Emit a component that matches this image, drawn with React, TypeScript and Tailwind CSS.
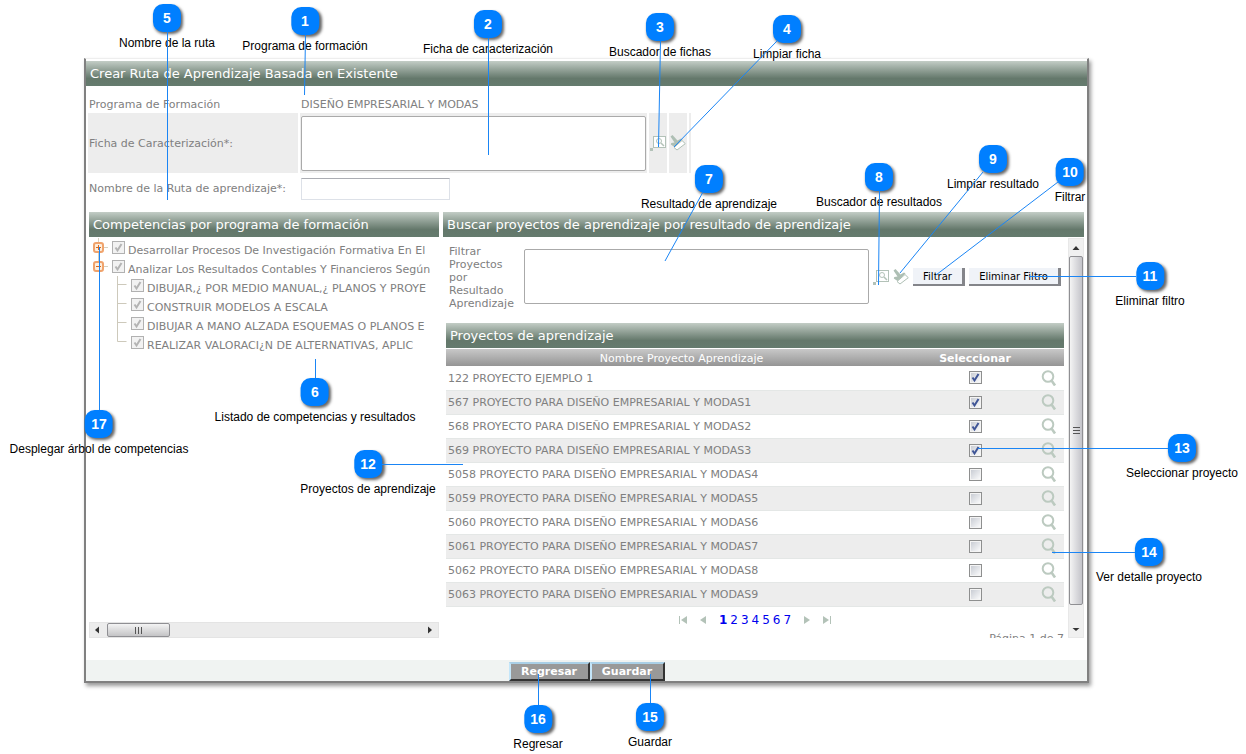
import { useState } from "react";

const CALLOUTS = [
  { n: 5, text: "Nombre de la ruta", place: "left-[167px] top-[4px]" },
  { n: 1, text: "Programa de formación", place: "left-[305px] top-[7px]" },
  { n: 2, text: "Ficha de caracterización", place: "left-[488px] top-[10px]" },
  { n: 3, text: "Buscador de fichas", place: "left-[660px] top-[13px]" },
  { n: 4, text: "Limpiar ficha", place: "left-[787px] top-[15px]" },
  { n: 7, text: "Resultado de aprendizaje", place: "left-[709px] top-[165px]" },
  { n: 8, text: "Buscador de resultados", place: "left-[879px] top-[163px]" },
  { n: 9, text: "Limpiar resultado", place: "left-[993px] top-[145px]" },
  { n: 10, text: "Filtrar", place: "left-[1070px] top-[158px]" },
  { n: 11, text: "Eliminar filtro", place: "left-[1150px] top-[262px]" },
  { n: 17, text: "Desplegar árbol de competencias", place: "left-[99px] top-[410px]" },
  { n: 6, text: "Listado de competencias y resultados", place: "left-[315px] top-[378px]" },
  { n: 12, text: "Proyectos de aprendizaje", place: "left-[368px] top-[450px]" },
  { n: 13, text: "Seleccionar proyecto", place: "left-[1182px] top-[434px]" },
  { n: 14, text: "Ver detalle proyecto", place: "left-[1149px] top-[538px]" },
  { n: 16, text: "Regresar", place: "left-[538px] top-[705px]" },
  { n: 15, text: "Guardar", place: "left-[650px] top-[703px]" },
];

const LEADERS = [
  [167.5, 32, 167.5, 200],
  [305.5, 35, 304.5, 95],
  [488.5, 38, 488.5, 155],
  [660.5, 41, 658.5, 147],
  [777, 41, 674, 147],
  [703, 192, 665, 261],
  [879.5, 191, 878.5, 285],
  [983, 172, 900, 273],
  [1058, 182, 936, 275],
  [1136, 276.5, 1029, 276.5],
  [99.5, 247, 99.5, 410],
  [315.5, 359, 315.5, 378],
  [382, 464.5, 463, 464.5],
  [978, 448.5, 1168, 448.5],
  [1052, 552.5, 1135, 552.5],
  [538.5, 674, 538.5, 705],
  [650.5, 674, 650.5, 703],
];

const PROJECTS = [
  { name: "122 PROYECTO EJEMPLO 1", on: true },
  { name: "567 PROYECTO PARA DISEÑO EMPRESARIAL Y MODAS1", on: true },
  { name: "568 PROYECTO PARA DISEÑO EMPRESARIAL Y MODAS2", on: true },
  { name: "569 PROYECTO PARA DISEÑO EMPRESARIAL Y MODAS3", on: true },
  { name: "5058 PROYECTO PARA DISEÑO EMPRESARIAL Y MODAS4", on: false },
  { name: "5059 PROYECTO PARA DISEÑO EMPRESARIAL Y MODAS5", on: false },
  { name: "5060 PROYECTO PARA DISEÑO EMPRESARIAL Y MODAS6", on: false },
  { name: "5061 PROYECTO PARA DISEÑO EMPRESARIAL Y MODAS7", on: false },
  { name: "5062 PROYECTO PARA DISEÑO EMPRESARIAL Y MODAS8", on: false },
  { name: "5063 PROYECTO PARA DISEÑO EMPRESARIAL Y MODAS9", on: false },
];

const TREE = [
  { level: 0, open: false, text: "Desarrollar Procesos De Investigación Formativa En El" },
  { level: 0, open: true, text: "Analizar Los Resultados Contables Y Financieros Según" },
  { level: 1, last: false, text: "DIBUJAR,¿ POR MEDIO MANUAL,¿ PLANOS Y PROYE" },
  { level: 1, last: false, text: "CONSTRUIR MODELOS A ESCALA" },
  { level: 1, last: false, text: "DIBUJAR A MANO ALZADA ESQUEMAS O PLANOS E" },
  { level: 1, last: true, text: "REALIZAR VALORACI¿N DE ALTERNATIVAS, APLIC" },
];

function TitleBar({ children }: { children: string }) {
  return (
    <h2 className="flex h-[25px] w-full items-center whitespace-nowrap bg-linear-to-b from-[#c3cdc6] via-[#64786b] via-70% to-[#657b6e] px-1 text-[13px] leading-4 text-white">
      {children}
    </h2>
  );
}

function SearchIcon() {
  return (
    <svg className="size-4" viewBox="0 0 16 16" fill="none" stroke="#b3c2b8">
      <rect x="3.5" y="1.5" width="12" height="11" fill="#fff" />
      <circle cx="9" cy="6" r="2.5" />
      <path d="M11 8l3 3" strokeWidth="1.5" />
      <rect x="0" y="13" width="3" height="3" fill="#b3c2b8" stroke="none" />
    </svg>
  );
}

function BrushIcon() {
  return (
    <svg className="size-4" viewBox="0 0 16 16" fill="none">
      <path d="M.5 1.500L2.500 0L7.500 5.500L11 3.500L12.500 4.500L4.500 12L.8 9.500L1.300 8L4.500 7.500Z" fill="#aebfb4" />
      <path d="M4 12.500L12 5.500L15.300 8.700L7 15Z" fill="#fff" stroke="#aebfb4" />
    </svg>
  );
}

function Magnifier() {
  return (
    <svg className="mx-auto block size-4" viewBox="0 0 16 16" fill="none" stroke="#bccac0">
      <circle cx="7" cy="6.500" r="5.300" strokeWidth="2" />
      <path d="M10.500 10.500l3.500 5" strokeWidth="2.600" />
    </svg>
  );
}

function Tick({ className }: { className: string }) {
  return (
    <svg className={className} viewBox="0 0 13 13" fill="none" stroke="currentColor">
      <path d="M3.500 6.500L5.500 9.500L9.500 3" strokeWidth="2" />
    </svg>
  );
}

function TreeToggle({ open }: { open: boolean }) {
  return (
    <button type="button" aria-label={open ? "Contraer" : "Desplegar"} className="block">
      <svg className="block h-[19px] w-[19px]" viewBox="0 0 19 19" fill="none">
        <path d={open ? "M5.500 0v5" : "M5.500 0v19"} stroke="#d5d0c0" />
        <path d="M10 9.500h5" stroke="#d5d0c0" />
        <rect x="1" y="5" width="9" height="9" rx="2" fill="#fdeedd" stroke="#f0a36c" strokeWidth="2" />
        <path d={open ? "M3 9.500h5" : "M3 9.500h5M5.500 7v5"} stroke="#d9691e" />
      </svg>
    </button>
  );
}

function Tree() {
  return (
    <ul className="overflow-hidden pt-px whitespace-nowrap text-[11px] leading-[19px] text-[#808080]">
      {TREE.map((node) => (
        <li key={node.text} className={node.level ? "flex h-[19px] pl-7" : "flex h-[19px] pl-1"}>
          {node.level ? (
            <svg className="h-[19px] w-[14px] shrink-0" viewBox="0 0 14 19" fill="none" stroke="#cdc9bb">
              <path d={node.last ? "M.5 0v8.500h9" : "M.5 0v19M.5 8.500h9"} />
            </svg>
          ) : (
            <TreeToggle open={!!node.open} />
          )}
          <label className="flex gap-[3px]">
            <span className="mt-[3px] grid size-[13px] shrink-0">
              <input
                type="checkbox"
                defaultChecked
                disabled
                className="col-start-1 row-start-1 size-[13px] appearance-none border border-[#b1b1b1] bg-[#f2f2f2]"
              />
              <Tick className="col-start-1 row-start-1 size-[13px] text-[#b4b4b4]" />
            </span>
            <span className="pt-[3px]">{node.text}</span>
          </label>
        </li>
      ))}
    </ul>
  );
}

function ProjectRow({ name, on }: { name: string; on: boolean }) {
  const [checked, setChecked] = useState(on);
  return (
    <tr className="h-6 border-b border-[#e4e7e6] even:bg-[#ededed]">
      <td className="px-[2px] pt-[2px] text-[11px] leading-3">{name}</td>
      <td>
        <span className="mx-auto grid size-[13px]">
          <input
            type="checkbox"
            aria-label={name}
            checked={checked}
            onChange={() => setChecked(!checked)}
            className="col-start-1 row-start-1 size-[13px] appearance-none border border-[#8e8f8f] bg-linear-to-br from-[#c4c8d0] to-white shadow-[inset_0_0_0_1px_#f4f4f4]"
          />
          {checked && <Tick className="pointer-events-none col-start-1 row-start-1 size-[13px] text-[#3f5596]" />}
        </span>
      </td>
      <td>
        <button type="button" aria-label={`Ver detalle ${name}`} className="mx-auto block">
          <Magnifier />
        </button>
      </td>
    </tr>
  );
}

function Pager() {
  return (
    <nav className="flex h-[26px] items-center justify-center text-[12px] leading-4 text-[#0000ee]">
      <svg className="mr-3 h-2 w-2" viewBox="0 0 8 8" fill="#b3c2b8">
        <path d="M0 0h1v8H0zM8 0v8L2 4z" />
      </svg>
      <svg className="mr-3 h-2 w-2" viewBox="0 0 8 8" fill="#b3c2b8">
        <path d="M7 0v8L1 4z" />
      </svg>
      <span className="flex gap-[3px]">
        <a href="#1" className="font-bold">1</a>
        {[2, 3, 4, 5, 6, 7].map((p) => (
          <a key={p} href={`#${p}`}>{p}</a>
        ))}
      </span>
      <svg className="ml-3 h-2 w-2" viewBox="0 0 8 8" fill="#b3c2b8">
        <path d="M1 0v8l6-4z" />
      </svg>
      <svg className="ml-3 h-2 w-2" viewBox="0 0 8 8" fill="#b3c2b8">
        <path d="M7 0h1v8H7zM0 0v8l6-4z" />
      </svg>
    </nav>
  );
}

function VerticalScrollbar() {
  return (
    <div className="flex w-4 shrink-0 flex-col items-center border border-[#e8e8e8] bg-[#f0f0f0]">
      <svg className="h-[17px] w-2" viewBox="0 0 8 17" fill="#333">
        <path d="M4 7l3.500 4h-7z" />
      </svg>
      <div className="flex w-full flex-1 items-center justify-center rounded-xs border border-[#8f8f93] bg-linear-to-r from-[#f4f4f4] to-[#c4c4ca]">
        <svg className="h-2 w-[7px]" viewBox="0 0 7 8" stroke="#555">
          <path d="M0 .5h7M0 3.500h7M0 6.500h7" />
        </svg>
      </div>
      <svg className="h-8 w-2" viewBox="0 0 8 32" fill="#333">
        <path d="M4 26l3.500-3h-7z" />
      </svg>
    </div>
  );
}

function HorizontalScrollbar() {
  return (
    <div className="flex h-4 items-center border border-[#e4e4e4] bg-[#ececec]">
      <svg className="h-2 w-[17px]" viewBox="0 0 17 8" fill="#333">
        <path d="M9 .5v7L5 4z" />
      </svg>
      <div className="flex h-full w-[63px] items-center justify-center rounded-xs border border-[#8f8f93] bg-linear-to-b from-[#f4f4f4] to-[#c4c4c6]">
        <svg className="h-[7px] w-2" viewBox="0 0 8 7" stroke="#555">
          <path d="M.5 0v7M3.500 0v7M6.500 0v7" />
        </svg>
      </div>
      <svg className="ml-auto h-2 w-3" viewBox="0 0 12 8" fill="#333">
        <path d="M2 .5v7L6 4z" />
      </svg>
    </div>
  );
}

const smallButton =
  "h-[18px] whitespace-nowrap border-r-[3px] border-b-2 border-[#84858a] bg-[#f0f3f8] pt-[2px] text-[10px] leading-3 text-black";
const footButton =
  "h-[19px] border-2 border-t-[#a9cfe6] border-r-[#333] border-b-[#333] border-l-[#c4e6fa] bg-[#999] px-2 text-[11px] leading-3 font-bold text-white";
const textArea = "block h-[55px] resize-none rounded-xs border border-[#aaa] bg-white text-[11px]";

export default function App() {
  return (
    <div className="relative min-h-[754px] overflow-hidden bg-white pt-[58px] pr-[157px] pl-[84px] font-['DejaVu_Sans',Verdana,sans-serif] text-[11px] leading-[13px] text-[#808080]">
      <main className="border-2 border-t border-[#808080] border-t-[#eeeeee] bg-white shadow-[2px_3px_4px_rgba(0,0,0,0.4)]">
        <div className="pt-[2px]">
          <TitleBar>Crear Ruta de Aprendizaje Basada en Existente</TitleBar>
        </div>

        <form className="pl-[2px]">
          <div className="mt-[9px] flex h-[18px] items-center gap-[2px]">
            <span className="w-[210px] shrink-0 pl-px">Programa de Formación</span>
            <span className="pl-px">DISEÑO EMPRESARIAL Y MODAS</span>
          </div>
          <div className="flex h-[60px] gap-[2px]">
            <label htmlFor="ficha" className="flex w-[210px] shrink-0 items-center bg-[#ededed] pl-px">
              Ficha de Caracterización*:
            </label>
            <div className="flex items-center bg-[#ededed] px-px">
              <textarea id="ficha" className={`${textArea} w-[345px]`} />
            </div>
            <button type="button" aria-label="Buscar ficha" className="flex w-[18px] items-center justify-center bg-[#ededed]">
              <SearchIcon />
            </button>
            <button type="button" aria-label="Limpiar ficha" className="flex w-[18px] items-center justify-center bg-[#ededed]">
              <BrushIcon />
            </button>
            <span className="w-[2px] bg-[#ededed]" />
          </div>
          <div className="flex h-[31px] items-center gap-[2px]">
            <label htmlFor="ruta" className="w-[210px] shrink-0 pl-px whitespace-nowrap">
              Nombre de la Ruta de aprendizaje*:
            </label>
            <input id="ruta" type="text" className="ml-px h-[22px] w-[149px] border border-[#dde1e8] border-t-[#abadb3] px-1" />
          </div>
        </form>

        <div className="mt-2 flex gap-1 pr-[3px] pl-[3px]">
          <section className="flex w-[350px] shrink-0 flex-col">
            <TitleBar>Competencias por programa de formación</TitleBar>
            <Tree />
            <div className="mt-auto">
              <HorizontalScrollbar />
            </div>
          </section>

          <section className="min-w-0 flex-1">
            <TitleBar>Buscar proyectos de aprendizaje por resultado de aprendizaje</TitleBar>
            <div className="mt-px flex h-[400px]">
              <div className="mr-1 min-w-0 flex-1 overflow-hidden pl-[3px]">
                <div className="flex h-[85px] items-start pt-[7px]">
                  <label htmlFor="resultado" className="w-[78px] shrink-0 pl-[3px]">
                    Filtrar Proyectos por Resultado Aprendizaje
                  </label>
                  <div className="flex items-center pt-1">
                    <textarea id="resultado" className={`${textArea} w-[345px]`} />
                    <button type="button" aria-label="Buscar resultado" className="ml-1">
                      <SearchIcon />
                    </button>
                    <button type="button" aria-label="Limpiar resultado" className="ml-1">
                      <BrushIcon />
                    </button>
                    <button type="button" className={`${smallButton} ml-1 w-[52px]`}>Filtrar</button>
                    <button type="button" className={`${smallButton} ml-1 w-[92px]`}>Eliminar Filtro</button>
                  </div>
                </div>
                <TitleBar>Proyectos de aprendizaje</TitleBar>
                <table className="mt-px w-full table-fixed border-collapse">
                  <colgroup>
                    <col />
                    <col className="w-[116px]" />
                    <col className="w-[31px]" />
                  </colgroup>
                  <thead>
                    <tr className="h-[17px] bg-linear-to-b from-[#c8c8c8] to-[#959595] text-[11px] leading-[13px] text-white">
                      <th className="pt-px font-normal">Nombre Proyecto Aprendizaje</th>
                      <th className="pt-px font-bold">Seleccionar</th>
                      <th aria-label="Detalle" />
                    </tr>
                  </thead>
                  <tbody>
                    {PROJECTS.map((p) => (
                      <ProjectRow key={p.name} {...p} />
                    ))}
                  </tbody>
                </table>
                <Pager />
                <p className="text-right leading-3">Página 1 de 7</p>
              </div>
              <VerticalScrollbar />
            </div>
          </section>
        </div>

        <footer className="mt-[22px] flex h-[21px] items-end justify-center bg-[#f0f3f2]">
          <button type="button" className={`${footButton} w-[81px]`}>Regresar</button>
          <button type="button" className={`${footButton} w-[75px]`}>Guardar</button>
        </footer>
      </main>

      {CALLOUTS.map((c) => (
        <div key={c.n} className={`pointer-events-none absolute flex w-max -translate-x-1/2 flex-col items-center gap-1 ${c.place}`}>
          <span className="flex size-7 items-center justify-center rounded-[10px] bg-[#007fff] font-['Liberation_Sans',Arial,sans-serif] text-[14px] leading-4 font-bold text-white shadow-[2px_2px_3px_rgba(0,0,0,0.6)]">
            {c.n}
          </span>
          <span className="font-['Liberation_Sans',Arial,sans-serif] text-[12px] leading-[14px] text-black">{c.text}</span>
        </div>
      ))}
      <svg className="pointer-events-none absolute top-0 left-0 h-[754px] w-[1246px]" viewBox="0 0 1246 754" stroke="#1a85f5" fill="none">
        {LEADERS.map(([x1, y1, x2, y2]) => (
          <line key={`${x1}-${y1}`} x1={x1} y1={y1} x2={x2} y2={y2} />
        ))}
      </svg>
    </div>
  );
}
